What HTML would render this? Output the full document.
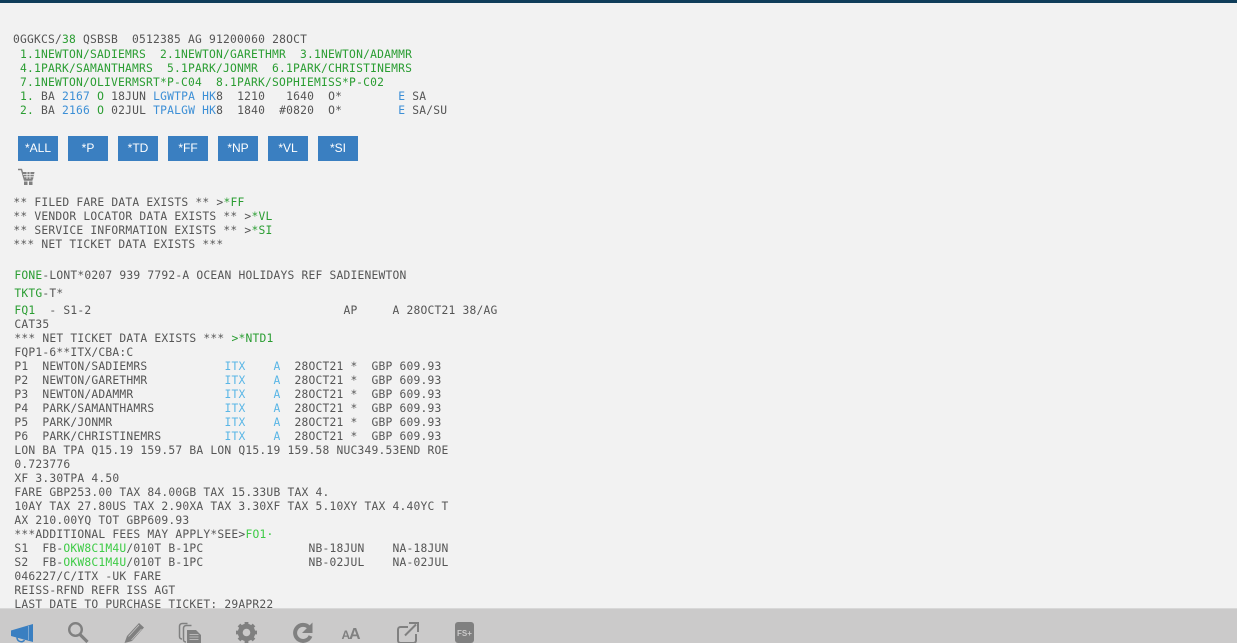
<!DOCTYPE html>
<html><head><meta charset="utf-8"><style>
html,body{margin:0;padding:0;width:1237px;height:643px;overflow:hidden;background:#f2f2f2}
#top{position:absolute;left:0;top:0;width:1237px;height:3px;background:#0f3d5a}
.l{position:absolute;white-space:pre;font:11.3px/14px "DejaVu Sans Mono",monospace;letter-spacing:.2px;color:#555;margin-top:1px}
.g{color:#2a9d32}.b{color:#3c8fd6}.c{color:#5ab6e6}.h{color:#3ecb46}
.btn{position:absolute;top:136px;width:40px;height:25px;background:#3a7fc1;color:#fff;font:12px/25px "Liberation Sans",sans-serif;text-align:center}
#bar{position:absolute;left:0;top:608px;width:1237px;height:35px;background:#cbcaca;border-top:1px solid #d8d8d8;box-sizing:border-box}
svg{position:absolute;left:0;top:0}
</style></head><body>
<div id="top"></div>
<div class="l" style="left:13px;top:33px;margin-top:0">0GGKCS/<span class="g">38</span> QSBSB  0512385 AG 91200060 28OCT</div>
<div class="l g" style="left:13px;top:47px"> 1.1NEWTON/SADIEMRS  2.1NEWTON/GARETHMR  3.1NEWTON/ADAMMR</div>
<div class="l g" style="left:13px;top:61px"> 4.1PARK/SAMANTHAMRS  5.1PARK/JONMR  6.1PARK/CHRISTINEMRS</div>
<div class="l g" style="left:13px;top:75px"> 7.1NEWTON/OLIVERMSRT*P-C04  8.1PARK/SOPHIEMISS*P-C02</div>
<div class="l" style="left:13px;top:89px"> <span class="g">1.</span> BA <span class="b">2167</span> <span class="g">O</span> 18JUN <span class="b">LGWTPA</span> <span class="b">HK</span>8  1210   1640  O*        <span class="b">E</span> SA</div>
<div class="l" style="left:13px;top:103px"> <span class="g">2.</span> BA <span class="b">2166</span> <span class="g">O</span> 02JUL <span class="b">TPALGW</span> <span class="b">HK</span>8  1840  #0820  O*        <span class="b">E</span> SA/SU</div>

<div class="btn" style="left:18px">*ALL</div>
<div class="btn" style="left:68px">*P</div>
<div class="btn" style="left:118px">*TD</div>
<div class="btn" style="left:168px">*FF</div>
<div class="btn" style="left:218px">*NP</div>
<div class="btn" style="left:268px">*VL</div>
<div class="btn" style="left:318px">*SI</div>

<svg width="1237" height="643" viewBox="0 0 1237 643">
  <path d="M18 169.500h3.500l3 10.500h8" fill="none" stroke="#808080" stroke-width="1.400"/>
  <path d="M22 172h12.500l-1.500 7.500h-9z" fill="#808080"/>
  <path d="M23 174.400h11M24 176.800h9.500M27 172v7M30 172v7" stroke="#f2f2f2" stroke-width=".8" fill="none"/>
  <rect x="24" y="181.500" width="3.500" height="3.500" fill="#808080"/>
  <rect x="29" y="181.500" width="3.500" height="3.500" fill="#808080"/>
</svg>

<div class="l" style="left:13.400px;top:195px">** FILED FARE DATA EXISTS ** &gt;<span class="g">*FF</span></div>
<div class="l" style="left:13.400px;top:209px">** VENDOR LOCATOR DATA EXISTS ** &gt;<span class="g">*VL</span></div>
<div class="l" style="left:13.400px;top:223px">** SERVICE INFORMATION EXISTS ** &gt;<span class="g">*SI</span></div>
<div class="l" style="left:13.400px;top:237px">*** NET TICKET DATA EXISTS ***</div>

<div class="l" style="left:14.400px;top:268px"><span class="g">FONE</span>-LONT*0207 939 7792-A OCEAN HOLIDAYS REF SADIENEWTON</div>
<div class="l" style="left:14.400px;top:286px"><span class="g">TKTG</span>-T*</div>
<div class="l" style="left:14.400px;top:303px"><span class="g">FQ1</span>  - S1-2                                    AP     A 28OCT21 38/AG</div>
<div class="l" style="left:14.400px;top:317px">CAT35</div>
<div class="l" style="left:14.400px;top:331px">*** NET TICKET DATA EXISTS *** <span class="g">&gt;*NTD1</span></div>
<div class="l" style="left:14.400px;top:345px">FQP1-6**ITX/CBA:C</div>
<div class="l" style="left:14.400px;top:359px">P1  NEWTON/SADIEMRS           <span class="c">ITX</span>    <span class="c">A</span>  28OCT21 *  GBP 609.93</div>
<div class="l" style="left:14.400px;top:373px">P2  NEWTON/GARETHMR           <span class="c">ITX</span>    <span class="c">A</span>  28OCT21 *  GBP 609.93</div>
<div class="l" style="left:14.400px;top:387px">P3  NEWTON/ADAMMR             <span class="c">ITX</span>    <span class="c">A</span>  28OCT21 *  GBP 609.93</div>
<div class="l" style="left:14.400px;top:401px">P4  PARK/SAMANTHAMRS          <span class="c">ITX</span>    <span class="c">A</span>  28OCT21 *  GBP 609.93</div>
<div class="l" style="left:14.400px;top:415px">P5  PARK/JONMR                <span class="c">ITX</span>    <span class="c">A</span>  28OCT21 *  GBP 609.93</div>
<div class="l" style="left:14.400px;top:429px">P6  PARK/CHRISTINEMRS         <span class="c">ITX</span>    <span class="c">A</span>  28OCT21 *  GBP 609.93</div>
<div class="l" style="left:14.400px;top:443px">LON BA TPA Q15.19 159.57 BA LON Q15.19 159.58 NUC349.53END ROE</div>
<div class="l" style="left:14.400px;top:457px">0.723776</div>
<div class="l" style="left:14.400px;top:471px">XF 3.30TPA 4.50</div>
<div class="l" style="left:14.400px;top:485px">FARE GBP253.00 TAX 84.00GB TAX 15.33UB TAX 4.</div>
<div class="l" style="left:14.400px;top:499px">10AY TAX 27.80US TAX 2.90XA TAX 3.30XF TAX 5.10XY TAX 4.40YC T</div>
<div class="l" style="left:14.400px;top:513px">AX 210.00YQ TOT GBP609.93</div>
<div class="l" style="left:14.400px;top:527px">***ADDITIONAL FEES MAY APPLY*SEE&gt;<span class="h">FO1·</span></div>
<div class="l" style="left:14.400px;top:541px">S1  FB-<span class="h">OKW8C1M4U</span>/010T B-1PC               NB-18JUN    NA-18JUN</div>
<div class="l" style="left:14.400px;top:555px">S2  FB-<span class="h">OKW8C1M4U</span>/010T B-1PC               NB-02JUL    NA-02JUL</div>
<div class="l" style="left:14.400px;top:569px">046227/C/ITX -UK FARE</div>
<div class="l" style="left:14.400px;top:583px">REISS-RFND REFR ISS AGT</div>
<div class="l" style="left:14.400px;top:597px">LAST DATE TO PURCHASE TICKET: 29APR22</div>

<div id="bar"></div>
<svg width="1237" height="643" viewBox="0 0 1237 643">
  <!-- megaphone -->
  <path d="M11 630.500l22-6.500V642l-22-6z" fill="#3a7fc1"/>
  <path d="M28.500 626v14" stroke="#7fa9d2" stroke-width="1" fill="none"/>
  <path d="M17 637.500c0 4.500 6 5.500 7.500 2.500" fill="none" stroke="#3a7fc1" stroke-width="1.500"/>
  <!-- search -->
  <circle cx="75.500" cy="629.500" r="6.300" fill="none" stroke="#808080" stroke-width="2.400"/>
  <path d="M80 634.500l7.500 7.500" stroke="#808080" stroke-width="3.200" fill="none"/>
  <!-- pencil -->
  <path d="M124.500 643l2.500-7 12-13 5 4.500-12 13.500z" fill="#808080"/>
  <path d="M128.500 636.500l10.500-11.500M131.500 640l10-11" stroke="#cbcaca" stroke-width=".7" fill="none"/>
  <!-- copy -->
  <g fill="none" stroke="#808080" stroke-width="1.500">
    <path d="M182 639c-1.500 0-2.500-1-2.500-2.500v-10c0-2 1-3 3-3h5"/>
    <path d="M186 642c-1.500 0-2.500-1-2.500-2.500v-11c0-2 1-3 3-3h5"/>
  </g>
  <path d="M187 630h9l5 5v8h-14z" fill="#808080"/>
  <path d="M189.500 634.500h9M189.500 637h9M189.500 639.500h9" stroke="#cbcaca" stroke-width=".8"/>
  <!-- gear -->
  <circle cx="246.500" cy="632.500" r="6.500" fill="none" stroke="#808080" stroke-width="4.500"/>
  <path d="M246.500 622v21M236 632.500h21M239 625l15 15M254 625l-15 15" stroke="#808080" stroke-width="3.800" fill="none"/>
  <circle cx="246.500" cy="632.500" r="3.800" fill="#cbcaca"/>
  <!-- refresh -->
  <path d="M309 627.500a8 8 0 1 0 1.500 8.500" fill="none" stroke="#808080" stroke-width="4"/>
  <path d="M312.500 622.500v10.500h-10.500z" fill="#808080"/>
  <!-- AA -->
  <text x="341.500" y="639" font-family="Liberation Sans,sans-serif" font-weight="700" font-size="12" fill="#808080">A</text>
  <text x="349" y="639" font-family="Liberation Sans,sans-serif" font-weight="700" font-size="16" fill="#808080">A</text>
  <!-- external -->
  <path d="M408 627h-7.500a2.500 2.500 0 0 0-2.500 2.500v11a2.500 2.500 0 0 0 2.500 2.500h13a2.500 2.500 0 0 0 2.500-2.500V634" fill="none" stroke="#808080" stroke-width="2"/>
  <path d="M405 635.500l11-11" fill="none" stroke="#808080" stroke-width="2"/>
  <path d="M409 623h9v9" fill="none" stroke="#808080" stroke-width="2"/>
  <!-- FS+ -->
  <rect x="455" y="622" width="19" height="21" rx="3" fill="#808080"/>
  <text x="457" y="636" font-family="Liberation Sans,sans-serif" font-weight="700" font-size="8" fill="#cbcaca">FS+</text>
</svg>
</body></html>
